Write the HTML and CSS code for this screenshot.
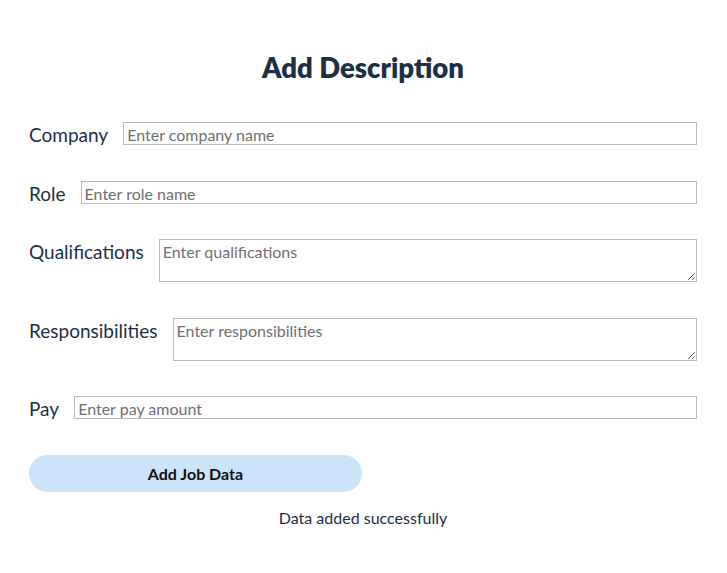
FILE: index.html
```html
<!DOCTYPE html>
<html lang="en">
<head>
<meta charset="utf-8">
<title>Add Description</title>
<link rel="stylesheet" href="styles.css">
</head>
<body>
<main class="page">
  <h1 class="title">Add Description</h1>
  <form class="form">
    <div class="row">
      <label class="label" for="company">Company</label>
      <input class="field" id="company" type="text" placeholder="Enter company name">
    </div>
    <div class="row">
      <label class="label" for="role">Role</label>
      <input class="field" id="role" type="text" placeholder="Enter role name">
    </div>
    <div class="row">
      <label class="label" for="qual">Qualifications</label>
      <textarea class="field area" id="qual" placeholder="Enter qualifications"></textarea>
    </div>
    <div class="row">
      <label class="label" for="resp">Responsibilities</label>
      <textarea class="field area" id="resp" placeholder="Enter responsibilities"></textarea>
    </div>
    <div class="row">
      <label class="label" for="pay">Pay</label>
      <input class="field" id="pay" type="text" placeholder="Enter pay amount">
    </div>
    <button class="submit" type="button">Add Job Data</button>
  </form>
  <p class="message">Data added successfully</p>
</main>
</body>
</html>
```
FILE: styles.css
```css
html, body {
  margin: 0;
  padding: 0;
  background: #ffffff;
}

body {
  font-family: "Lato", "Inter", "Liberation Sans", sans-serif;
  color: #1d2f45;
}

.page {
  padding: 53px 30px 0 29px;
}

.title {
  margin: 0 0 39px;
  text-align: center;
  font-size: 27.5px;
  font-weight: 800;
  color: #1d2f45;
  line-height: 30px;
}

.form {
  display: flex;
  flex-direction: column;
  gap: 35.5px;
}

.row {
  display: flex;
  align-items: flex-start;
}

.label {
  font-size: 19px;
  line-height: 21px;
  padding-top: 2px;
  margin-right: 15px;
  white-space: nowrap;
}

.field {
  flex: 1;
  box-sizing: border-box;
  height: 23px;
  margin: 0;
  padding: 2px 3px 0;
  border: 1px solid #b9b9b9;
  border-radius: 0;
  font-family: inherit;
  font-size: 16px;
  line-height: 19px;
  color: #222;
  background: #fff;
}

.field::placeholder {
  color: #6f6f6f;
}

.area {
  height: 43px;
  padding: 2px 3px;
  line-height: 19px;
}

.submit {
  align-self: flex-start;
  width: 333px;
  height: 37px;
  border: none;
  border-radius: 19px;
  background: #cce4f9;
  color: #111;
  font-family: inherit;
  font-size: 16px;
  font-weight: 700;
  cursor: pointer;
}

.message {
  margin: 16px 0 0;
  text-align: center;
  font-size: 16px;
  color: #1d2f45;
}
```
